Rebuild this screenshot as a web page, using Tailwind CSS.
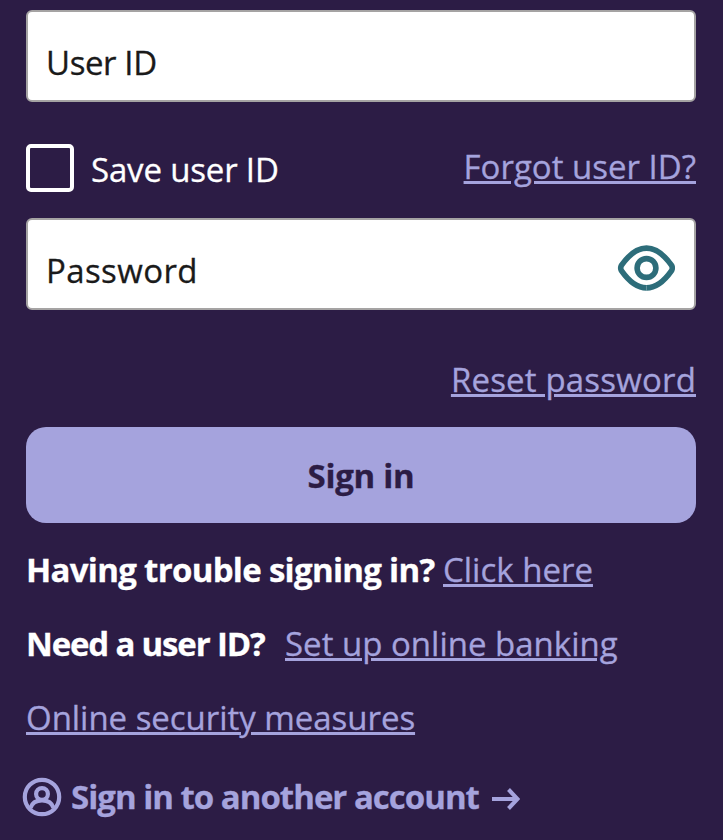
<!DOCTYPE html>
<html lang="en">
<head>
<meta charset="utf-8">
<title>Sign in</title>
<script src="https://cdn.jsdelivr.net/npm/@tailwindcss/browser@4"></script>
</head>
<body class="h-[840px] overflow-hidden bg-[#2c1c45] font-['Open_Sans',sans-serif] text-[33px] leading-[44px] whitespace-nowrap text-white [-webkit-text-stroke:0.3px]">
<main class="flex flex-col pt-[10px] pr-[27px] pl-[26px]">
  <label class="flex h-[92px] items-start rounded-[6px] border-2 border-[#a5a3a3] bg-white pt-[29px] pl-[18px] tracking-[-0.4px] text-[#1a1a1a]">User ID</label>

  <div class="mt-[42px] flex h-[48px] items-start justify-between">
    <label class="flex">
      <span class="size-[48px] rounded-[5px] border-4 border-white"></span>
      <span class="ml-[17px] pt-[4px] tracking-[-0.17px]">Save user ID</span>
    </label>
    <a class="mt-px text-[#a5a3dd] underline decoration-[3px] underline-offset-[2px]">Forgot user ID?</a>
  </div>

  <label class="mt-[26px] flex h-[92px] items-start justify-between rounded-[6px] border-2 border-[#a5a3a3] bg-white pt-[29px] pr-[19px] pl-[18px] tracking-[0.4px] text-[#1a1a1a]">
    Password
    <svg class="-mt-[5px] h-[48px] w-[58px]" viewBox="0 0 58 48" fill="none" stroke="#2d6d7a" stroke-width="5.6">
      <path d="M4.400 21.400C11 12 18.500 4.100 29.500 4.100C40.500 4.100 48 12 54.600 21.400Q56 24 54.600 26.600C48 36 40.500 43.900 29.500 43.900C18.500 43.900 11 36 4.400 26.600Q3 24 4.400 21.400Z"/>
      <circle cx="29.500" cy="24" r="9.400"/>
      <path d="M29.500 41.500V47" stroke="#8cb0b7" stroke-width="0.600"/>
    </svg>
  </label>

  <a class="mt-[48px] self-end tracking-[0.18px] text-[#a5a3dd] underline decoration-[3px] underline-offset-[2px]">Reset password</a>

  <button class="mt-[25px] h-[96px] rounded-[20px] bg-[#a5a3dd] pt-[2px] font-bold tracking-[-0.3px] text-[#2c1c45]">Sign in</button>

  <p class="mt-[25px] flex"><span class="w-[417px] font-bold tracking-[-0.7px]">Having trouble signing in?</span><a class="text-[#a5a3dd] underline decoration-[3px] underline-offset-[2px]">Click here</a></p>
  <p class="mt-[30px] flex"><span class="w-[259px] font-bold tracking-[-1.17px]">Need a user ID?</span><a class="text-[#a5a3dd] underline decoration-[3px] underline-offset-[2px]">Set up online banking</a></p>
  <a class="mt-[30px] self-start tracking-[-0.04px] text-[#a5a3dd] underline decoration-[3px] underline-offset-[2px]">Online security measures</a>

  <a class="mt-[35px] -ml-[4px] flex items-start text-[#a5a3dd]">
    <svg class="mt-[2px] size-[40px]" viewBox="0 0 40 40" fill="none" stroke="currentColor" stroke-width="4.200">
      <circle cx="20" cy="20" r="17.200"/>
      <circle cx="20" cy="17" r="5.900"/>
      <path d="M8.500 31C10 26 14.500 23.400 20 23.400S30 26 31.500 31"/>
    </svg>
    <span class="ml-[9px] w-[421px] font-bold tracking-[-1px]">Sign in to another account</span>
    <svg class="mt-[12px] h-[24px] w-[28px]" viewBox="0 0 28 24" fill="none" stroke="currentColor" stroke-width="4"><path d="M0 12H25M16.500 2.500L25.500 12L16.500 21.500"/></svg>
  </a>
</main>
</body>
</html>
